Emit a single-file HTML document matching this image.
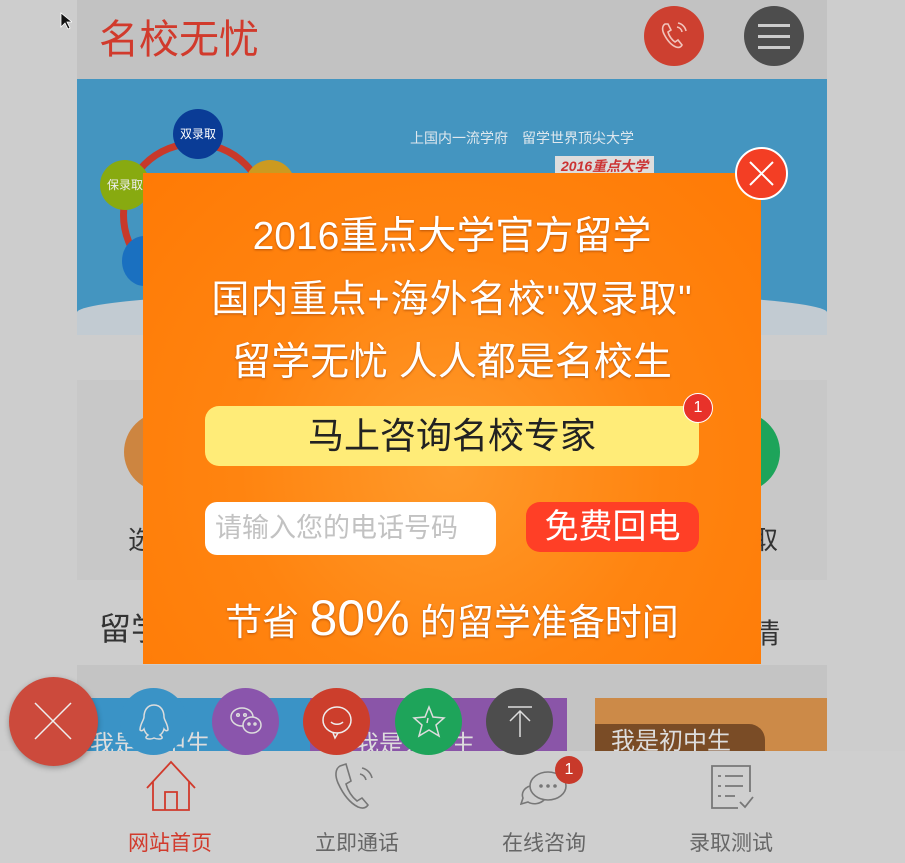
<!DOCTYPE html>
<html><head><meta charset="utf-8"><style>
*{margin:0;padding:0;box-sizing:border-box}
body{width:905px;height:863px;background:#cdcdcd;position:relative;overflow:hidden;font-family:"Liberation Sans","Noto Sans CJK SC",sans-serif}
.a{position:absolute}
.c{border-radius:50%}
.t{color:#fff;text-align:center;width:618px;left:0;text-shadow:0 1px 2px rgba(120,40,0,.5);white-space:nowrap}
</style></head><body>
<div class="a" style="left:77px;top:0;width:750px;height:79px;background:#c2c2c2"></div>
<div class="a" style="left:99px;top:7px;font-size:40px;color:#d13a2c">名校无忧</div>
<div class="a c" style="left:644px;top:6px;width:60px;height:60px;background:#cd4030"></div>
<svg class="a" style="left:656px;top:18px" width="36" height="36" viewBox="0 0 36 36" fill="none" stroke="#f1c4bc" stroke-width="1.6"><path d="M9 6c-3 2-3 6-1 10 3 6 7 11 12 13 3 1 5 0 6-2l-4-5-3 2c-3-2-6-6-7-10l3-2-3-6z"/><path d="M21 9a6 6 0 0 1 5 5M22 5a10 10 0 0 1 8 8"/></svg>
<div class="a c" style="left:744px;top:6px;width:60px;height:60px;background:#4d4d4d"></div>
<div class="a" style="left:758px;top:24px;width:32px;height:3px;background:#ccc;box-shadow:0 11px 0 #ccc,0 22px 0 #ccc"></div>
<div class="a" style="left:77px;top:79px;width:750px;height:251px;background:#4495c0"></div>
<div class="a" style="left:77px;top:290px;width:750px;height:45px;background:#c2cbd2;border-radius:50% 50% 0 0"></div>
<div class="a" style="left:410px;top:128px;font-size:14px;color:#dfe8ee">上国内一流学府　留学世界顶尖大学</div>
<div class="a" style="left:555px;top:156px;font-size:14px;color:#c33;background:#ddd;padding:0 6px;font-style:italic;font-weight:bold">2016重点大学</div>
<div class="a c" style="left:120px;top:140px;width:150px;height:150px;border:7px solid #c8392a"></div>
<div class="a c" style="left:173px;top:109px;width:50px;height:50px;background:#0a3c96;color:#fff;font-size:12px;line-height:50px;text-align:center">双录取</div>
<div class="a c" style="left:100px;top:160px;width:50px;height:50px;background:#88aa10;color:#eee;font-size:12px;line-height:50px;text-align:center">保录取</div>
<div class="a c" style="left:122px;top:236px;width:45px;height:50px;background:#1a70c0"></div>
<div class="a c" style="left:245px;top:160px;width:50px;height:50px;background:#cc9a20"></div>
<div class="a" style="left:77px;top:380px;width:750px;height:200px;background:#c8c8c8"></div>
<div class="a c" style="left:124px;top:412px;width:80px;height:80px;background:#cd8540"></div>
<div class="a c" style="left:700px;top:412px;width:80px;height:80px;background:#1da45a"></div>
<div class="a" style="left:128px;top:520px;font-size:26px;color:#333">选</div>
<div class="a" style="left:752px;top:520px;font-size:26px;color:#333">取</div>
<div class="a" style="left:99px;top:604px;font-size:32px;color:#333">留学</div>
<div class="a" style="left:752px;top:612px;font-size:28px;color:#333">情</div>
<div class="a" style="left:77px;top:665px;width:750px;height:90px;background:#c4c4c4"></div>
<div class="a" style="left:77px;top:698px;width:233px;height:57px;background:#3a93c6"></div>
<div class="a" style="left:310px;top:698px;width:257px;height:57px;background:#8a55a8"></div>
<div class="a" style="left:595px;top:698px;width:232px;height:57px;background:#cc8a48"></div>
<div class="a" style="left:595px;top:724px;width:170px;height:31px;background:#7a4c26;border-radius:0 16px 0 0;color:#ddd;font-size:24px;padding-left:16px;line-height:36px">我是初中生</div>
<div class="a" style="left:90px;top:724px;font-size:24px;color:#ddd">我是高中生</div>
<div class="a" style="left:355px;top:724px;font-size:24px;color:#ddd">我是大学生</div>
<div class="a" style="left:0;top:751px;width:905px;height:112px;background:#cfcfcf"></div>
<svg class="a" style="left:145px;top:760px" width="52" height="52" viewBox="0 0 52 52" fill="none" stroke="#d13a2c" stroke-width="1.8"><path d="M2 28L26 2l24 26M8 22v28h36V22M20 50V32h12v18"/></svg>
<svg class="a" style="left:332px;top:762px" width="50" height="50" viewBox="0 0 50 50" fill="none" stroke="#777" stroke-width="1.6"><path d="M8 4c-5 3-5 10-2 17 5 11 12 20 20 24 5 2 8 1 10-2l-6-7-5 3c-5-4-9-10-11-17l5-3L14 2z"/><path d="M28 12a8 8 0 0 1 6 6M30 6a13 13 0 0 1 10 10"/></svg>
<svg class="a" style="left:520px;top:764px" width="52" height="44" viewBox="0 0 52 44" fill="none" stroke="#777" stroke-width="1.6"><path d="M10 22c-6 2-9 7-7 12l-2 6 7-2c5 3 12 2 16-2"/><ellipse cx="28" cy="22" rx="18" ry="14"/><circle cx="21" cy="22" r="1" fill="#777"/><circle cx="28" cy="22" r="1" fill="#777"/><circle cx="35" cy="22" r="1" fill="#777"/></svg>
<div class="a c" style="left:555px;top:756px;width:28px;height:28px;background:#c8392a;color:#fff;font-size:16px;text-align:center;line-height:28px">1</div>
<svg class="a" style="left:708px;top:764px" width="50" height="46" viewBox="0 0 50 46" fill="none" stroke="#777" stroke-width="1.8"><path d="M30 44H4V2h38v26"/><path d="M10 12h3M17 12h18M10 22h3M17 22h18M10 32h3M17 32h10M32 38l5 5 8-10"/></svg>
<div class="a" style="left:128px;top:827px;font-size:21px;color:#d13a2c">网站首页</div>
<div class="a" style="left:315px;top:827px;font-size:21px;color:#666">立即通话</div>
<div class="a" style="left:502px;top:827px;font-size:21px;color:#666">在线咨询</div>
<div class="a" style="left:689px;top:827px;font-size:21px;color:#666">录取测试</div>
<div class="a c" style="left:9px;top:677px;width:89px;height:89px;background:#cc4a3c;box-shadow:0 2px 6px rgba(0,0,0,.3)"></div>
<svg class="a" style="left:31px;top:699px" width="44" height="44" stroke="#eee" stroke-width="1.5"><path d="M4 4l36 36M40 4L4 40"/></svg>
<div class="a c" style="left:120px;top:688px;width:67px;height:67px;background:#3a93c6"></div>
<svg class="a" style="left:137px;top:702px" width="34" height="40" viewBox="0 0 34 40" fill="none" stroke="#ddd" stroke-width="1.5"><path d="M17 3c-7 0-10 6-10 12 0 3-4 7-4 13 2 2 4-1 4-1 1 4 4 6 4 6-3 2-3 4 2 4 2 0 4-1 4-1s2 1 5 1c4 0 4-2 1-4 0 0 3-2 4-6 0 0 2 3 4 1 0-6-4-10-4-13 0-6-3-12-10-12z"/></svg>
<div class="a c" style="left:212px;top:688px;width:67px;height:67px;background:#8a55ac"></div>
<svg class="a" style="left:228px;top:704px" width="36" height="34" viewBox="0 0 36 34" fill="none" stroke="#ddd" stroke-width="1.5"><ellipse cx="14" cy="13" rx="11" ry="9"/><ellipse cx="24" cy="21" rx="9" ry="8" fill="#8a55ac"/><circle cx="10" cy="11" r="1.3"/><circle cx="17" cy="11" r="1.3"/><circle cx="21" cy="20" r="1"/><circle cx="27" cy="20" r="1"/></svg>
<div class="a c" style="left:303px;top:688px;width:67px;height:67px;background:#cc3e2c"></div>
<svg class="a" style="left:319px;top:704px" width="36" height="38" viewBox="0 0 36 38" fill="none" stroke="#eee" stroke-width="1.5"><ellipse cx="18" cy="16" rx="14" ry="13"/><path d="M12 18c3 3 9 3 12 0M14 29l2 5 3-5"/></svg>
<div class="a c" style="left:395px;top:688px;width:67px;height:67px;background:#1ea45a"></div>
<svg class="a" style="left:411px;top:704px" width="36" height="36" viewBox="0 0 36 36" fill="none" stroke="#ddd" stroke-width="1.5"><path d="M18 3l4 10 11 1-8 7 3 11-10-6-10 6 3-11-8-7 11-1z"/><path d="M17 14l-1 5"/></svg>
<div class="a c" style="left:486px;top:688px;width:67px;height:67px;background:#4d4d4d"></div>
<svg class="a" style="left:505px;top:705px" width="30" height="34" stroke="#ddd" stroke-width="1.5" fill="none"><path d="M3 2h24M15 32V6M5 16L15 6l10 10"/></svg>
<div class="a" style="left:143px;top:173px;width:618px;height:491px;background:radial-gradient(circle at 50% 60%,#ff9a2a,#ff8410 50%,#ff7a05)">
<div class="a t" style="top:32px;font-size:39px">2016重点大学官方留学</div>
<div class="a t" style="top:95px;font-size:38px;letter-spacing:1px">国内重点+海外名校"双录取"</div>
<div class="a t" style="top:158px;font-size:39px">留学无忧 人人都是名校生</div>
<div class="a" style="left:62px;top:233px;width:494px;height:60px;background:#ffec78;border-radius:14px;text-align:center;font-size:36px;line-height:60px;color:#222">马上咨询名校专家</div>
<div class="a c" style="left:540px;top:220px;width:30px;height:30px;background:#e8322a;border:1px solid #fff;color:#fff;font-size:16px;text-align:center;line-height:28px">1</div>
<div class="a" style="left:62px;top:329px;width:291px;height:53px;background:#fff;border-radius:12px;font-size:27px;line-height:53px;color:#c2c2c2;padding-left:10px;white-space:nowrap">请输入您的电话号码</div>
<div class="a" style="left:383px;top:329px;width:173px;height:50px;background:#ff3f26;border-radius:14px;color:#fff;font-size:34px;line-height:50px;text-align:center">免费回电</div>
<div class="a t" style="top:416px;font-size:37px">节省 <span style="font-size:50px">80%</span> 的留学准备时间</div>
</div>
<div class="a c" style="left:735px;top:147px;width:53px;height:53px;background:#f33e24;border:2px solid #fff"></div>
<svg class="a" style="left:747px;top:159px" width="29" height="29" stroke="#fff" stroke-width="2"><path d="M3 3l23 23M26 3L3 26"/></svg>
<svg class="a" style="left:60px;top:12px" width="12" height="18"><path d="M1 1v14l4-4 3 6 2-1-3-6h5z" fill="#111" stroke="#fff" stroke-width=".8"/></svg>
</body></html>
